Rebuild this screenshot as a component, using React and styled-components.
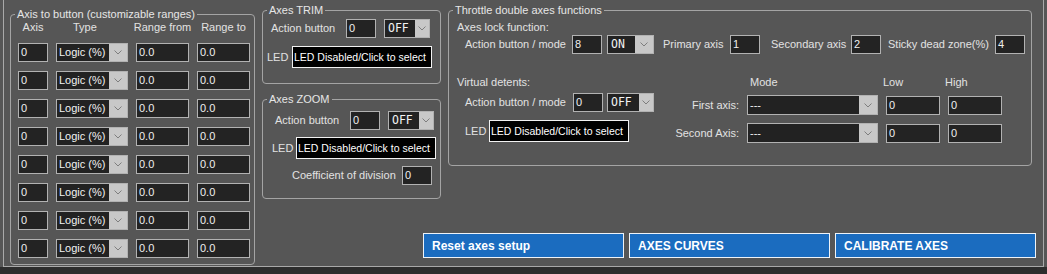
import React from "react";
import styled, { createGlobalStyle } from "styled-components";

const GlobalStyle = createGlobalStyle`
  body {
    margin: 0;
    background: #565656;
    font-family: "Liberation Sans", Arial, sans-serif;
    font-size: 11px;
    color: #e2e2e2;
  }
`;

const Page = styled.div`
  width: 1047px;
  height: 274px;
  display: flex;
  flex-direction: column;
  overflow: hidden;
`;

const Window = styled.div`
  box-sizing: content-box;
  margin: 0 3px 0 3px;
  width: 1033px;
  height: 266px;
  border: 1px solid #a9a9a9;
  border-top: none;
  display: flex;
  padding-left: 6px;
`;

const BottomStrip = styled.div`
  flex: 1;
  background: #2d2d2d;
`;

const Field = styled.fieldset`
  box-sizing: border-box;
  margin: ${p => p.$mt || 0}px 0 0 ${p => p.$ml || 0}px;
  padding: ${p => p.$pt || 0}px 0 0 0;
  min-width: 0;
  width: ${p => p.$w}px;
  height: ${p => p.$h}px;
  border: 1px solid #a4a4a4;
  border-radius: 4px;
`;

const Legend = styled.legend`
  margin-left: 4px;
  padding: 0 2px;
  font-size: 11px;
  line-height: 14px;
  color: #e6e6e6;
`;

const RangesGrid = styled.div`
  display: grid;
  grid-template-columns: 30px 72px 53px 53px;
  grid-template-rows: 13px;
  grid-auto-rows: 19px;
  column-gap: 8px;
  row-gap: 9px;
  margin-left: 7px;
`;

const HeaderCell = styled.div`
  line-height: 13px;
  white-space: nowrap;
  justify-self: ${p => (p.$start ? "start" : "center")};
  padding-left: ${p => p.$pl || 0}px;
  color: #e2e2e2;
`;

const TextBox = styled.div`
  box-sizing: border-box;
  width: ${p => p.$w}px;
  height: ${p => p.$h || 19}px;
  margin-left: ${p => p.$ml || 0}px;
  border: 1px solid #b2b2b2;
  background: #232323;
  color: #efefef;
  font-size: 11px;
  line-height: ${p => (p.$h || 19) - 2}px;
  padding-left: 2px;
  flex: none;
`;

const SelectBox = styled.div`
  box-sizing: border-box;
  display: flex;
  width: ${p => p.$w}px;
  height: ${p => p.$h || 19}px;
  margin-left: ${p => p.$ml || 0}px;
  border: 1px solid #b2b2b2;
  background: #222;
  flex: none;
`;

const SelectValue = styled.span`
  flex: 1;
  padding-left: ${p => (p.$mono ? 3 : 2)}px;
  font-family: ${p =>
    p.$mono ? '"DejaVu Sans Mono", "Liberation Mono", monospace' : '"Liberation Sans", Arial, sans-serif'};
  font-size: ${p => (p.$mono ? 11.5 : 11)}px;
  line-height: ${p => (p.$h || 19) - 2}px;
  color: #f2f2f2;
  white-space: nowrap;
  overflow: hidden;
`;

const SelectArrow = styled.span`
  width: ${p => p.$aw}px;
  background: #c8c8c8;
  display: flex;
  align-items: center;
  justify-content: center;
`;

const Chevron = () => (
  <svg width="8" height="5" viewBox="0 0 8 5">
    <polyline points="0.5,0.5 4,4 7.5,0.5" fill="none" stroke="#7e7e7e" strokeWidth="1" />
  </svg>
);

const Select = ({ value, w, aw = 18, h = 19, ml, mono }) => (
  <SelectBox $w={w} $h={h} $ml={ml}>
    <SelectValue $mono={mono} $h={h}>{value}</SelectValue>
    <SelectArrow $aw={aw}>
      <Chevron />
    </SelectArrow>
  </SelectBox>
);

const Row = styled.div`
  display: flex;
  align-items: center;
  padding-left: ${p => p.$pl || 0}px;
  margin-top: ${p => p.$mt || 0}px;
`;

const Label = styled.span`
  flex: none;
  width: ${p => (p.$w ? `${p.$w}px` : "auto")};
  margin-left: ${p => p.$ml || 0}px;
  text-align: ${p => (p.$right ? "right" : "left")};
  line-height: 13px;
  white-space: nowrap;
  color: #e2e2e2;
`;

const LedBox = styled.div`
  box-sizing: border-box;
  width: 140px;
  height: 22px;
  border: 1px solid #f2f2f2;
  background: #000;
  color: #fff;
  font-size: 10.5px;
  line-height: 20px;
  padding-left: 1px;
  white-space: nowrap;
  overflow: hidden;
`;

const RightArea = styled.div`
  display: flex;
  flex-direction: column;
  margin-left: 7px;
  flex: 1;
`;

const TopRow = styled.div`
  display: flex;
  align-items: flex-start;
  margin-top: 3px;
`;

const Column = styled.div`
  display: flex;
  flex-direction: column;
  width: 179px;
`;

const SectionTitle = styled.div`
  line-height: 13px;
  color: #e2e2e2;
  padding-left: ${p => p.$pl || 0}px;
  margin-top: ${p => p.$mt || 0}px;
`;

const Detents = styled.div`
  display: flex;
  align-items: flex-start;
  margin-top: 22px;
  padding-left: 8px;
`;

const DetentsLeft = styled.div`
  width: 200px;
  display: flex;
  flex-direction: column;
`;

const DetentsGrid = styled.div`
  display: grid;
  grid-template-columns: 82px 131px 54px 54px;
  grid-template-rows: 11px 20px 20px;
  column-gap: 8px;
  row-gap: 8px;
  align-items: center;
`;

const GridHead = styled.div`
  align-self: start;
  line-height: 13px;
  padding-left: ${p => p.$pl || 0}px;
  margin-left: ${p => p.$ml || 0}px;
  color: #e2e2e2;
`;

const ButtonRow = styled.div`
  display: flex;
  justify-content: flex-end;
  gap: 5px;
  margin-top: auto;
  padding: 0 7px 8px 0;
`;

const BlueButton = styled.button`
  box-sizing: border-box;
  width: 201px;
  height: 25px;
  margin: 0;
  padding: 0 0 0 8px;
  border: 1px solid #eef3f8;
  background: #1b6cbf;
  color: #fff;
  font-family: "Liberation Sans", Arial, sans-serif;
  font-size: 12px;
  font-weight: bold;
  text-align: left;
`;

const rows = Array.from({ length: 8 });

export default function App() {
  return (
    <Page>
      <GlobalStyle />
      <Window>
        <Field $w={245} $h={258} $mt={7}>
          <Legend>Axis to button (customizable ranges)</Legend>
          <RangesGrid>
            <HeaderCell>Axis</HeaderCell>
            <HeaderCell $start $pl={17}>Type</HeaderCell>
            <HeaderCell>Range from</HeaderCell>
            <HeaderCell>Range to</HeaderCell>
            {rows.map((_, i) => (
              <React.Fragment key={i}>
                <TextBox $w={30}>0</TextBox>
                <Select value="Logic (%)" w={72} aw={18} />
                <TextBox $w={53}>0.0</TextBox>
                <TextBox $w={53}>0.0</TextBox>
              </React.Fragment>
            ))}
          </RangesGrid>
        </Field>

        <RightArea>
          <TopRow>
            <Column>
              <Field $w={179} $h={81} $pt={2}>
                <Legend>Axes TRIM</Legend>
                <Row $pl={8}>
                  <Label $w={75}>Action button</Label>
                  <TextBox $w={30}>0</TextBox>
                  <Select value="OFF" w={46} aw={14} ml={8} mono />
                </Row>
                <Row $pl={4} $mt={8}>
                  <Label $w={25}>LED</Label>
                  <LedBox>LED Disabled/Click to select</LedBox>
                </Row>
              </Field>
              <Field $w={179} $h={107} $mt={8} $pt={5}>
                <Legend>Axes ZOOM</Legend>
                <Row $pl={12}>
                  <Label $w={75}>Action button</Label>
                  <TextBox $w={30}>0</TextBox>
                  <Select value="OFF" w={46} aw={14} ml={8} mono />
                </Row>
                <Row $pl={9} $mt={7}>
                  <Label $w={24}>LED</Label>
                  <LedBox>LED Disabled/Click to select</LedBox>
                </Row>
                <Row $pl={29} $mt={7}>
                  <Label $w={110}>Coefficient of division</Label>
                  <TextBox $w={30}>0</TextBox>
                </Row>
              </Field>
            </Column>

            <Field $w={584} $h={163} $ml={7} $pt={4}>
              <Legend>Throttle double axes functions</Legend>
              <SectionTitle $pl={8}>Axes lock function:</SectionTitle>
              <Row $pl={16} $mt={1}>
                <Label $w={107}>Action button / mode</Label>
                <TextBox $w={30}>8</TextBox>
                <Select value="ON" w={47} aw={18} ml={5} mono />
                <Label $w={67} $ml={9}>Primary axis</Label>
                <TextBox $w={30}>1</TextBox>
                <Label $w={80} $ml={11}>Secondary axis</Label>
                <TextBox $w={30}>2</TextBox>
                <Label $w={107} $ml={7}>Sticky dead zone(%)</Label>
                <TextBox $w={30}>4</TextBox>
              </Row>

              <Detents>
                <DetentsLeft>
                  <SectionTitle>Virtual detents:</SectionTitle>
                  <Row $pl={8} $mt={4}>
                    <Label $w={108}>Action button / mode</Label>
                    <TextBox $w={30}>0</TextBox>
                    <Select value="OFF" w={47} aw={14} ml={4} mono />
                  </Row>
                  <Row $pl={8} $mt={8}>
                    <Label $w={24}>LED</Label>
                    <LedBox>LED Disabled/Click to select</LedBox>
                  </Row>
                </DetentsLeft>
                <DetentsGrid>
                  <span />
                  <GridHead $pl={3}>Mode</GridHead>
                  <GridHead $ml={-3}>Low</GridHead>
                  <GridHead $ml={-3}>High</GridHead>

                  <Label $right>First axis:</Label>
                  <Select value="---" w={131} h={20} aw={18} />
                  <TextBox $w={54}>0</TextBox>
                  <TextBox $w={54}>0</TextBox>

                  <Label $right>Second Axis:</Label>
                  <Select value="---" w={131} h={20} aw={18} />
                  <TextBox $w={54}>0</TextBox>
                  <TextBox $w={54}>0</TextBox>
                </DetentsGrid>
              </Detents>
            </Field>
          </TopRow>

          <ButtonRow>
            <BlueButton>Reset axes setup</BlueButton>
            <BlueButton>AXES CURVES</BlueButton>
            <BlueButton>CALIBRATE AXES</BlueButton>
          </ButtonRow>
        </RightArea>
      </Window>
      <BottomStrip />
    </Page>
  );
}
